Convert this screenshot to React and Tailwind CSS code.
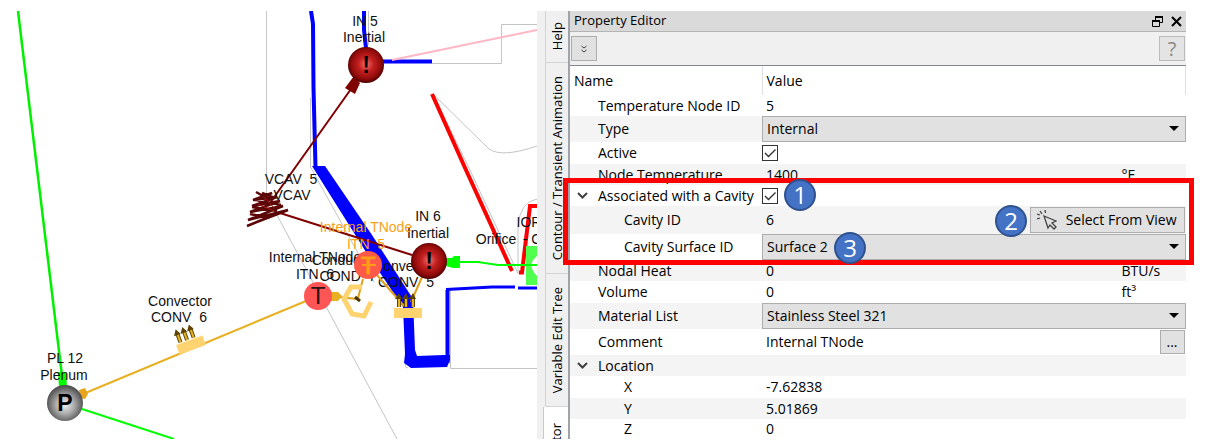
import React from "react";

const labels = [
  ["IN 5", 365, 26],
  ["Inertial", 364, 42],
  ["VCAV\u00a0\u00a05", 291, 184],
  ["VCAV", 292, 200],
  ["IN 6", 428, 221],
  ["Inertial", 428, 238],
  ["Internal TNode", 315, 262],
  ["ITN\u00a0\u00a06", 315, 279],
  ["Conductor", 344, 265],
  ["COND\u00a0\u00a07", 348, 281],
  ["Convector", 405, 271],
  ["CONV\u00a0\u00a05", 406, 287],
  ["Convector", 180, 306],
  ["CONV\u00a0\u00a06", 179, 322],
  ["PL 12", 65, 363],
  ["Plenum", 64, 380],
  ["Orifice", 496, 244],
  ["- C", 532, 244],
  ["IOR", 529, 227],
];

function Flow({ x, y, angle }) {
  return (
    <g transform={`translate(${x} ${y}) rotate(${angle})`}>
      {[-9, -2, 5].map((dx) => (
        <g key={dx}>
          <path d={`M${dx} -6V-16`} stroke="#5c4300" strokeWidth="4" />
          <path d={`M${dx} -6V-15`} stroke="#e6b325" strokeWidth="2" />
          <path d={`M${dx - 4} -14L${dx} -20L${dx + 3} -14Z`} fill="#5c4300" />
        </g>
      ))}
      <rect x="-14" y="-5" width="28" height="10" fill="#ffd470" />
    </g>
  );
}

function Ball({ x, y, letter, fill }) {
  return (
    <g>
      <circle cx={x} cy={y} r="18" fill={fill} />
      <text x={x} y={y + 8} textAnchor="middle" fill="#000000" className="font-['Liberation_Sans'] text-[23px] font-bold">
        {letter}
      </text>
    </g>
  );
}

function ModelView() {
  return (
    <svg
      viewBox="0 11 537 428"
      preserveAspectRatio="xMinYMin slice"
      className="block w-full"
      role="img"
      aria-label="Model view"
      fill="none"
    >
      <defs>
        <radialGradient id="redBall" cx="0.5" cy="0.48" r="0.52">
          <stop offset="0" stopColor="#f47070" />
          <stop offset="0.4" stopColor="#c42020" />
          <stop offset="0.8" stopColor="#900a0a" />
          <stop offset="1" stopColor="#4c0000" />
        </radialGradient>
        <radialGradient id="grayBall" cx="0.5" cy="0.55" r="0.52">
          <stop offset="0" stopColor="#f2f2f2" />
          <stop offset="0.5" stopColor="#aaaaaa" />
          <stop offset="1" stopColor="#505050" />
        </radialGradient>
      </defs>

      <g stroke="#c4c4c4" strokeWidth="1">
        <path d="M266.5 11V193L278 217L397 439" />
        <path d="M310.5 98V167L374 282" />
        <path d="M368.5 11V45" />
        <path d="M432 63.500H501.500V24.500H537" />
        <path d="M433 94L489 149Q502 158 537 146" />
        <path d="M433 94L470 170L518 273.500V226Q520 202 537 199" />
        <path d="M450.500 290V368.500H537M405.500 360V367L408 368" />
      </g>

      <path d="M18 11L62 376" stroke="#00f000" strokeWidth="2.500" />
      <path d="M58 372H66L67 387L59 388Z" fill="#00ff00" />
      <path d="M82 409L174 439" stroke="#00ff00" strokeWidth="2" />
      <path d="M83 394L306 301" stroke="#e8b020" strokeWidth="2" />
      <path d="M79 390L85 388L88 394L85 399L80 398Z" fill="#e8a41c" />

      <g stroke="#0000ff">
        <path d="M311 11L313 24L313.500 88L315.500 167" strokeWidth="4" />
        <path d="M364 11V30L366 48" strokeWidth="4" />
        <path d="M383 61.500H432" strokeWidth="4" />
        <path d="M447.500 363V290" strokeWidth="4" />
        <path d="M446 289.500L492 287H515M518 288H537" strokeWidth="3" />
      </g>
      <path d="M312 166H325L372 235L413 299L415 350L417 356L444 355H450V360L447 367L411 368L404 363L405 354L403 307L366 252Z" fill="#0000ff" />

      <path d="M392 60L537 30" stroke="#ffb7c4" strokeWidth="2" />
      <path d="M432 94L466 170L512 271" stroke="#ff0000" strokeWidth="4" />
      <path d="M519 272.500H522L530 206H537" stroke="#ff0000" strokeWidth="4" />

      <path d="M270 203L351 89M280 213L412 255" stroke="#800000" strokeWidth="2" />
      <path d="M354 76L360 83L355 94L345 88Z" fill="#800000" />
      <path
        d="M256 192L265 197L272 193L253 200L277 197L252 206L280 201L250 212L283 206L248 220L288 210L247 226L276 214M262 193L275 198M256 200L281 205M252 207L277 211M250 214L270 218"
        stroke="#5c0707"
        strokeWidth="2.500"
      />
      <path d="M263 196L274 208M258 204L274 211" stroke="#a01010" />

      <path d="M452 262L478 262L498 265H537" stroke="#00ff00" strokeWidth="2" />
      <path d="M446 258H452L454 256H460V268H453L446 266Z" fill="#00ff00" />
      <rect x="526" y="246" width="11" height="39" fill="#50ff50" />
      <path d="M537 256Q526 265 537 276Z" fill="#ffffff" />
      <path d="M526 265H537" stroke="#00ff00" strokeWidth="2" />

      <g className="font-['Liberation_Sans'] text-[14px]" textAnchor="middle" fill="#101010">
        {labels.map(([text, x, y]) => (
          <text key={`${text}-${x}-${y}`} x={x} y={y}>
            {text}
          </text>
        ))}
      </g>

      <path d="M330 296L357 299M363 279L358 298M376 274L404 306M422 277L411 302" stroke="#e0a118" strokeWidth="2" />
      <path d="M331 292H338L342 296L338 301H331Z" fill="#e8b020" />
      <path d="M355 297L360 301" stroke="#4a3600" strokeWidth="3" />
      <path d="M362 287L351 287L344 299L352 314L364 316L371 302" stroke="#ffd470" strokeWidth="5" />

      <Flow x={191} y={345} angle={-20} />
      <Flow x={408} y={313} angle={0} />

      <Ball x={366} y={65} letter="!" fill="url(#redBall)" />
      <Ball x={429} y={261} letter="!" fill="url(#redBall)" />
      <Ball x={65} y={403} letter="P" fill="url(#grayBall)" />

      <circle cx="318" cy="296" r="14" fill="#ff5555" />
      <text x="318" y="304" textAnchor="middle" fill="#2a1414" className="font-['Liberation_Sans'] text-[24px]">T</text>
      <circle cx="368" cy="265" r="14" fill="#ff5a48" />
      <text x="368" y="274" textAnchor="middle" fill="#ff9d18" stroke="#ff9d18" className="font-['Liberation_Sans'] text-[24px]">T</text>
      <path d="M362 265H376" stroke="#ff9d18" strokeWidth="2" />
      <g className="font-['Liberation_Sans'] text-[14px]" textAnchor="middle" fill="#f5a21b">
        <text x="366" y="232">Internal TNode</text>
        <text x="366" y="249">{"ITN\u00a0\u00a05"}</text>
      </g>
    </svg>
  );
}

function SideTab({ children }) {
  return (
    <button type="button" className="flex w-full justify-center border-b border-l border-[#d4d4d4] bg-[#f0f0f0] py-[13px] text-[13px] leading-4">
      <span className="rotate-180 whitespace-nowrap [writing-mode:vertical-rl]">{children}</span>
    </button>
  );
}

function SideTabs() {
  return (
    <nav aria-label="Panels" className="flex h-full flex-col bg-[#f0f0f0]">
      <button type="button" className="flex h-[52px] w-full items-center justify-center border-b border-l border-[#d4d4d4] text-[13px] leading-4">
        <span className="rotate-180 [writing-mode:vertical-rl]">Help</span>
      </button>
      <SideTab>Contour / Transient Animation</SideTab>
      <SideTab>Variable Edit Tree</SideTab>
      <button type="button" className="-ml-0.5 flex h-0 grow items-start justify-center overflow-hidden border-l border-[#c8c8c8] bg-white pt-4 text-[13px] leading-4">
        <span className="rotate-180 whitespace-nowrap [writing-mode:vertical-rl]">Property Editor</span>
      </button>
    </nav>
  );
}

function Select({ id, value }) {
  return (
    <div className="relative w-full">
      <select id={id} defaultValue={value} className="block h-[26px] w-full appearance-none border border-[#adadad] bg-[#e1e1e1] px-1">
        <option>{value}</option>
      </select>
      <svg viewBox="0 0 10 5" className="pointer-events-none absolute top-[10px] right-[7px] h-[5px] w-[10px]" aria-hidden="true">
        <path d="M0 0H10L5 5Z" fill="#000000" />
      </svg>
    </div>
  );
}

function Checkbox({ id }) {
  return (
    <span className="relative block size-4">
      <input id={id} type="checkbox" defaultChecked className="peer block size-4 appearance-none border border-[#333333] bg-white" />
      <svg viewBox="0 0 16 16" className="pointer-events-none absolute inset-0 hidden size-4 peer-checked:block" fill="none" aria-hidden="true">
        <path d="M3 8L6.500 11.500L13.500 4.500" stroke="#333333" strokeWidth="1.400" />
      </svg>
    </span>
  );
}

function Value({ children, unit }) {
  return (
    <div className="flex items-center">
      <span className="flex-1 pl-1">{children}</span>
      {unit && <span className="w-16">{unit}</span>}
    </div>
  );
}

function Row({ name, htmlFor, height = "h-[22px]", level = 1, open, children }) {
  return (
    <tr className={`${height} odd:bg-white even:bg-[#f4f4f4]`}>
      <th scope="row" className="p-0 text-left font-normal whitespace-nowrap">
        <div className="flex items-center">
          <span className="flex w-7 shrink-0 justify-center pr-1">
            {open && (
              <svg viewBox="0 0 11 7" className="h-[7px] w-[11px]" fill="none" aria-hidden="true">
                <path d="M1 1L5.500 5.500L10 1" stroke="#404040" strokeWidth="2" />
              </svg>
            )}
          </span>
          <label htmlFor={htmlFor} className={level === 2 ? "pl-[26px]" : ""}>{name}</label>
        </div>
      </th>
      <td className="p-0">{children}</td>
    </tr>
  );
}

function Badge({ children, className }) {
  return (
    <span className={`absolute flex size-8 items-center justify-center rounded-full border-2 border-[#2f528f] bg-[#4472c4] text-[24px] leading-6 text-white ${className}`}>
      {children}
    </span>
  );
}

function PropertyEditor() {
  return (
    <section className="relative min-w-0 border-l-2 border-[#a0a4aa] bg-white">
      <header className="flex h-[21px] items-center border-b border-[#b4b4b4] bg-[#dadada] px-1 text-[13px]">
        <h1 className="flex-1">Property Editor</h1>
        <button type="button" aria-label="Float panel" className="mr-2">
          <svg viewBox="0 0 11 11" className="size-[11px]" fill="none" stroke="#000000" aria-hidden="true">
            <path d="M3.500 4V.5H10.500V6.500H8" />
            <path d="M3 1H11" strokeWidth="2" />
            <path d="M.5 4.500H7.500V10.500H.5Z" />
            <path d="M0 5H8" strokeWidth="2" />
          </svg>
        </button>
        <button type="button" aria-label="Close panel">
          <svg viewBox="0 0 11 11" className="size-[11px]" aria-hidden="true">
            <path d="M1 1L10 10M10 1L1 10" stroke="#000000" strokeWidth="2" />
          </svg>
        </button>
      </header>
      <div className="flex h-[34px] items-center justify-between border-b border-[#82878f] bg-[#f0f0f0] px-px">
        <button type="button" aria-label="Expand all" className="flex h-[25px] w-[26px] items-center justify-center border border-[#adadad] bg-[#e1e1e1]">
          <svg viewBox="0 0 6 8" className="h-2 w-[6px]" fill="none" stroke="#404040" aria-hidden="true">
            <path d="M.5 1L3 3L5.500 1M.5 5L3 7L5.500 5" />
          </svg>
        </button>
        <button type="button" aria-label="Help" className="flex h-[25px] w-[26px] items-center justify-center border border-[#bcbcbc] bg-[#e4e4e4] text-[20px] leading-5 text-[#888888]">
          ?
        </button>
      </div>
      <table className="w-full table-fixed border-collapse text-[14px] leading-5">
        <colgroup>
          <col className="w-[192px]" />
          <col />
        </colgroup>
        <thead>
          <tr className="h-[29px]">
            <th className="border-r border-[#e0e0e0] py-0 pl-1 text-left font-normal">Name</th>
            <th className="border-r border-[#e0e0e0] py-0 pl-1 text-left font-normal">Value</th>
          </tr>
        </thead>
        <tbody>
          <Row name="Temperature Node ID" height="h-[21px]"><Value>5</Value></Row>
          <Row name="Type" htmlFor="type" height="h-[26px]"><Select id="type" value="Internal" /></Row>
          <Row name="Active" htmlFor="active"><Checkbox id="active" /></Row>
          <Row name="Node Temperature" height="h-[21px]"><Value unit="°F">1400</Value></Row>
          <Row name="Associated with a Cavity" htmlFor="cavity" height="h-[21px]" open><Checkbox id="cavity" /></Row>
          <Row name="Cavity ID" height="h-[28px]" level={2}>
            <div className="flex items-center justify-between pr-px pl-1">
              <span>6</span>
              <button type="button" className="flex h-[26px] w-[155px] items-center justify-between border border-[#adadad] bg-[#e1e1e1] pr-[7px] pl-[6px] whitespace-nowrap">
                <svg viewBox="0 0 20 20" className="size-5" fill="none" stroke="#444444" strokeWidth="1.300" aria-hidden="true">
                  <path d="M7 6L19 11L15 13L19 17L17 19L13 15L11 18Z" />
                  <path d="M3 1L5 4M8 0L8.500 3M0 4L3 5M0 9L3 8" />
                </svg>
                Select From View
              </button>
            </div>
          </Row>
          <Row name="Cavity Surface ID" htmlFor="surface" height="h-[26px]" level={2}><Select id="surface" value="Surface 2" /></Row>
          <Row name="Nodal Heat" height="h-[21px]"><Value unit="BTU/s">0</Value></Row>
          <Row name="Volume"><Value unit="ft³">0</Value></Row>
          <Row name="Material List" htmlFor="material" height="h-[26px]"><Select id="material" value="Stainless Steel 321" /></Row>
          <Row name="Comment" height="h-[26px]">
            <div className="flex items-center justify-between pr-px pl-1">
              <span>Internal TNode</span>
              <button type="button" aria-label="Edit comment" className="flex h-6 w-[25px] items-center justify-center border border-[#adadad] bg-[#e1e1e1]">...</button>
            </div>
          </Row>
          <Row name="Location" height="h-[21px]" open />
          <Row name="X" level={2}><Value>-7.62838</Value></Row>
          <Row name="Y" height="h-[21px]" level={2}><Value>5.01869</Value></Row>
          <Row name="Z" height="h-[20px]" level={2}><Value>0</Value></Row>
        </tbody>
      </table>
      <div className="pointer-events-none absolute top-[167px] -right-2 -left-[7px] h-[87px] border-[5px] border-[#ff0000]">
        <Badge className="-top-[4px] left-[216px]">1</Badge>
        <Badge className="top-[22px] right-[162px]">2</Badge>
        <Badge className="top-[49px] left-[266px]">3</Badge>
      </div>
    </section>
  );
}

export default function App() {
  return (
    <main className="grid grid-cols-[537fr_8px_23px_618fr] bg-white py-[11px] pr-5 font-['Open_Sans','Noto_Sans',sans-serif] text-black">
      <ModelView />
      <div className="bg-[#f0f0f0]" />
      <SideTabs />
      <PropertyEditor />
    </main>
  );
}
